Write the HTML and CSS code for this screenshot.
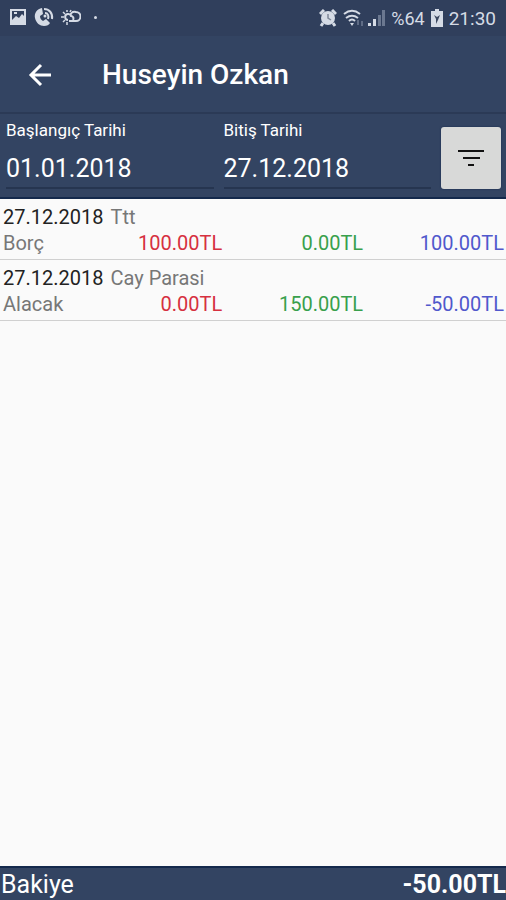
FILE: index.html
```html
<!DOCTYPE html>
<html lang="tr">
<head>
<meta charset="utf-8">
<meta name="viewport" content="width=device-width, initial-scale=1">
<title>Huseyin Ozkan</title>
<link rel="stylesheet" href="styles.css">
</head>
<body>
<div class="status">
  <div class="status-group status-left">
    <svg width="18" height="18" viewBox="0 0 18 18" aria-hidden="true"><path fill="currentColor" fill-rule="evenodd" d="M1 1h16v16H1zM3 3v9l4-4 3 2 3-4 2 2V3zM5 4h3v2H5z"/></svg>
    <svg width="20" height="20" viewBox="0 0 20 20" aria-hidden="true"><path fill="currentColor" d="M8 1C3 2 0 6 1 11c1 5 5 8 9 8 3 0 5-1 6-3l-4-4-3 2c-2-1-3-3-3-5l3-2z"/><g fill="none" stroke="currentColor" stroke-width="2"><path d="M10 2c5 0 9 4 8 10M11 6c3 0 4 3 3 6"/></g><circle cx="11" cy="9" r="1.500" fill="currentColor"/></svg>
    <svg width="20" height="18" viewBox="0 0 20 18" fill="none" stroke="currentColor" stroke-width="2" aria-hidden="true"><path d="M8 13h7a4.500 4.500 0 0 0 0-9c-4-1-6 2-5 4M7 12a3 3 0 1 1 3-4c2 0 3 2 2 4"/><path stroke-width="1.500" d="M6 2v2M2 4l2 2M0 9h3M2 14l2-2M6 14v3M9 4l1-2"/></svg>
    <span class="more-dot"></span>
  </div>
  <div class="status-group status-right">
    <svg width="18" height="18" viewBox="0 0 18 18" aria-hidden="true"><circle cx="9" cy="9" r="7" fill="currentColor"/><path stroke="currentColor" stroke-width="3" d="M1 5l4-4M13 1l4 4M4 14l-2 3M14 14l2 3"/><path fill="none" stroke="#7d8798" stroke-width="1.500" d="M9 5v4l3 2"/></svg>
    <svg width="21" height="18" viewBox="0 0 21 18" fill="none" stroke="currentColor" stroke-width="2" aria-hidden="true"><path d="M1 5c5-4 11-4 16 0M3 9c4-3 8-3 12 0M6 12c2-2 4-2 6 0"/><path fill="currentColor" stroke="none" d="M7 14h4l-2 3z"/><path stroke="#5f6c85" d="M15 11v5M19 12v5"/></svg>
    <svg class="signal" width="17" height="18" viewBox="0 0 17 18" aria-hidden="true"><path fill="currentColor" d="M0 14h3v3H0zM5 10h3v7H5z"/><path fill="#6b7890" d="M10 6h3v11h-3zM14 1h3v16h-3z"/></svg>
    <span class="percent">%64</span>
    <svg width="12" height="18" viewBox="0 0 12 18" aria-hidden="true"><path fill="currentColor" d="M4 0h4v2h4v16H0V2h4z"/><path fill="#3c4860" d="M3 6l3 2 3-2-2 5-2 4V10z"/></svg>
    <span>21:30</span>
  </div>
</div>
<header class="appbar">
  <button class="back" type="button" aria-label="Geri">
    <svg width="24" height="24" viewBox="0 0 24 24" fill="none" stroke="currentColor" stroke-width="3" aria-hidden="true"><path d="M23 12H3M13 2L3 12l10 10"/></svg>
  </button>
  <h1 class="title">Huseyin Ozkan</h1>
</header>
<form class="filters">
  <div class="field">
    <label for="start">Başlangıç Tarihi</label>
    <input id="start" type="text" value="01.01.2018">
  </div>
  <div class="field">
    <label for="end">Bitiş Tarihi</label>
    <input id="end" type="text" value="27.12.2018">
  </div>
  <button class="filter" type="button" aria-label="Filtrele">
    <svg width="26" height="18" viewBox="0 0 26 18" aria-hidden="true"><path fill="#111" d="M0 1h26v2H0zM5 8h17v2H5zM10 15h6v2h-6z"/></svg>
  </button>
</form>
<main class="list">
  <article class="entry">
    <div class="head"><time>27.12.2018</time><span>Ttt</span></div>
    <div class="amounts"><span>Borç</span><span class="debit">100.00TL</span><span class="credit">0.00TL</span><span class="balance">100.00TL</span></div>
  </article>
  <article class="entry">
    <div class="head"><time>27.12.2018</time><span>Cay Parasi</span></div>
    <div class="amounts"><span>Alacak</span><span class="debit">0.00TL</span><span class="credit">150.00TL</span><span class="balance">-50.00TL</span></div>
  </article>
</main>
<footer class="total"><span>Bakiye</span><strong>-50.00TL</strong></footer>
</body>
</html>
```
FILE: styles.css
```css
* { box-sizing: border-box; }
body {
  margin: 0;
  min-height: 100vh;
  display: flex;
  flex-direction: column;
  background: #fafafa;
  color: #777;
  font-family: Roboto, "Liberation Sans", sans-serif;
  font-size: 20px;
}
svg { display: block; flex: none; }
button { border: 0; padding: 0; font: inherit; }
.status {
  display: flex;
  justify-content: space-between;
  height: 36px;
  padding: 0 10px 0 9px;
  background: #303f5c;
  color: #d5dbe5;
  font-size: 19px;
}
.status-group { display: flex; align-items: center; }
.status-left { gap: 7px; padding-bottom: 2px; }
.more-dot { width: 3px; height: 3px; margin-left: 6px; border-radius: 50%; background: currentColor; }
.status-right { gap: 6px; }
.percent { font-size: 18px; }
.signal { margin-left: -2px; }
.appbar {
  display: flex;
  align-items: center;
  height: 78px;
  padding: 1px 0 0 28px;
  border-bottom: 2px solid #2b3a56;
  background: #334462;
  color: #fff;
}
.back { display: grid; place-items: center; width: 24px; height: 48px; background: none; color: inherit; }
.title { margin: 0 0 0 50px; font-size: 28px; font-weight: 500; }
.filters {
  display: grid;
  grid-template-columns: 1fr 1fr 60px;
  column-gap: 10px;
  padding: 5px 5px 8px 6px;
  border-bottom: 2px solid #14294c;
  background: #334462;
  color: #fff;
}
.field { display: flex; flex-direction: column; min-width: 0; }
.field label { font-size: 17px; line-height: 22px; }
.field input {
  width: 100%;
  height: 48px;
  padding: 8px 0 0;
  border: 0;
  border-bottom: 2px solid #263550;
  background: none;
  color: inherit;
  font: 25px Roboto, "Liberation Sans", sans-serif;
}
.filter {
  display: grid;
  place-items: center;
  align-self: end;
  height: 62px;
  border-radius: 3px;
  background: #d8d9d8;
  box-shadow: 0 0 2px #14294c;
}
.list { flex: 1; }
.entry { padding: 5px 2px 3px 3px; border-bottom: 1px solid #d0d0d0; line-height: 26px; }
.head { display: flex; gap: 7px; }
.head time { color: #222; }
.amounts { display: grid; grid-template-columns: 5fr 9fr 9fr 9fr; }
.debit, .credit, .balance { text-align: right; }
.debit { color: #d6303f; }
.credit { color: #38a04c; }
.balance { color: #5058cc; }
.total {
  display: flex;
  justify-content: space-between;
  padding: 2px 0 0 1px;
  border-top: 2px solid #14294c;
  background: #334462;
  color: #fff;
  font-size: 25px;
  line-height: 30px;
}
.total strong { font-weight: 700; }
```
